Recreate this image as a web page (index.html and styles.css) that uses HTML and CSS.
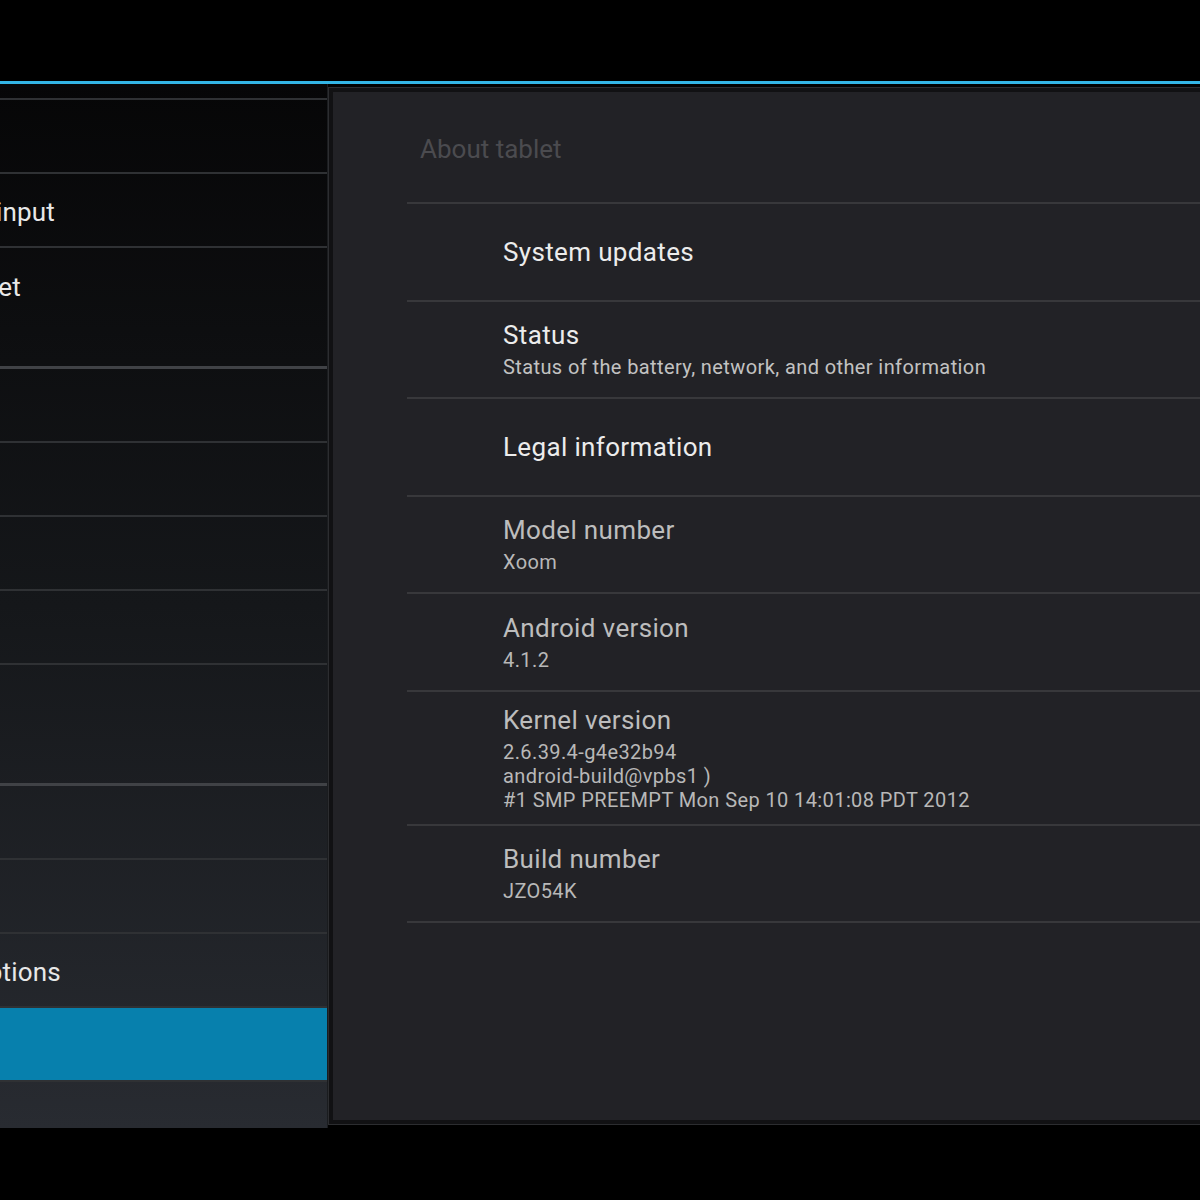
FILE: index.html
```html
<!DOCTYPE html>
<html lang="en">
<head>
    <meta charset="UTF-8">
    <meta name="viewport" content="width=device-width, initial-scale=1.0">
    <title>Settings - About tablet</title>
    <link rel="stylesheet" href="styles.css">
</head>
<body>
    <div class="action-bar"></div>
    <div class="accent"></div>

    <div class="main">
        <div class="headers">
            <div class="header-item partial"></div>
            <div class="header-item"></div>
            <div class="header-item"><div class="label-box" style="width: 55px"><span>Language &amp; input</span></div></div>
            <div class="header-item last"><div class="label-box" style="width: 21px"><span>Backup &amp; reset</span></div></div>
            <div class="header-category"></div>
            <div class="header-item"></div>
            <div class="header-item"></div>
            <div class="header-item"></div>
            <div class="header-item"></div>
            <div class="header-item last"></div>
            <div class="header-category"></div>
            <div class="header-item"></div>
            <div class="header-item"></div>
            <div class="header-item"><div class="label-box" style="width: 61px"><span>Developer options</span></div></div>
            <div class="header-item selected"></div>
        </div>

        <div class="detail">
            <div class="detail-inner">
                <div class="detail-title">About tablet</div>
                <div class="prefs">
                    <div class="pref">
                        <div class="pref-title">System updates</div>
                    </div>
                    <div class="pref">
                        <div class="pref-title">Status</div>
                        <div class="pref-summary">Status of the battery, network, and other information</div>
                    </div>
                    <div class="pref">
                        <div class="pref-title">Legal information</div>
                    </div>
                    <div class="pref info">
                        <div class="pref-title">Model number</div>
                        <div class="pref-summary">Xoom</div>
                    </div>
                    <div class="pref info">
                        <div class="pref-title">Android version</div>
                        <div class="pref-summary">4.1.2</div>
                    </div>
                    <div class="pref info">
                        <div class="pref-title">Kernel version</div>
                        <div class="pref-summary">2.6.39.4-g4e32b94<br>android-build@vpbs1 )<br>#1 SMP PREEMPT Mon Sep 10 14:01:08 PDT 2012</div>
                    </div>
                    <div class="pref info">
                        <div class="pref-title">Build number</div>
                        <div class="pref-summary">JZO54K</div>
                    </div>
                </div>
            </div>
        </div>
    </div>
</body>
</html>
```

FILE: styles.css
```css
body { margin: 0; background: #000; font-family: Roboto, "Open Sans", sans-serif; width: 1200px; height: 1200px; overflow: hidden; }
.action-bar { height: 81px; background: #000; }
.accent { height: 3px; background: #33b5e5; }

.main { display: flex; height: 1044px; }

.headers { width: 327px; flex-shrink: 0; overflow: hidden; background: linear-gradient(to bottom, #060607 0%, #15171a 50%, #282b31 100%); border-right: 1px solid #1a1c1f; }
.header-item { height: 72px; border-bottom: 2px solid #2f3134; display: flex; align-items: center; }
.header-item.partial { height: 14px; }
.header-item.last { border-bottom: 0; height: 74px; }
.header-category { height: 44px; border-bottom: 3px solid #404246; }
.header-item.selected { background: #0780ad; height: 72px; border-top: 0; }
.label-box { display: flex; justify-content: flex-end; width: 0; white-space: nowrap; color: #e8e8e8; font-size: 26px; padding-top: 4px; letter-spacing: 0.2px; }

.detail { flex: 1; margin: 3px -20px 3px 0; border: 1px solid #2c2d30; background: #111113; padding: 4px; }
.detail-inner { height: 100%; background: #222226; padding-left: 74px; box-sizing: border-box; }
.detail-title { height: 106px; padding: 4px 0 0 13px; display: flex; align-items: center; color: #4b4b4f; font-size: 26px; border-bottom: 2px solid #38383b; }

.pref { min-height: 71.5px; padding: 12px 0 12px 96px; border-bottom: 2px solid #38383b; display: flex; flex-direction: column; justify-content: center; }
.pref-title { color: #ececec; font-size: 26px; line-height: 32px; letter-spacing: 0.35px; }
.pref-summary { color: #c2c2c2; font-size: 20px; line-height: 24px; margin-top: 4px; letter-spacing: 0.4px; }
.pref.info .pref-title { color: #bdbdbd; }
.pref.info .pref-summary { color: #b8b8b8; }
```
